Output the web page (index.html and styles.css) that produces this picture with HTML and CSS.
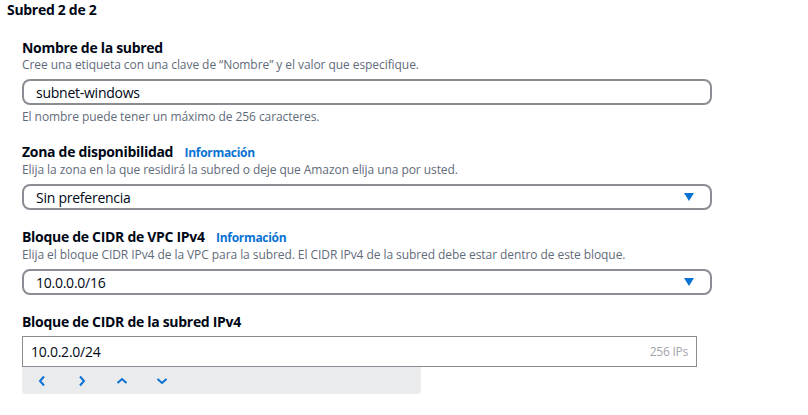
FILE: index.html
```html
<!DOCTYPE html>
<html lang="es">
<head>
<meta charset="utf-8">
<title>Subred 2 de 2</title>
<link rel="stylesheet" href="styles.css">
</head>
<body>
<div class="page">
  <h2 class="title">Subred 2 de 2</h2>
  <div class="form">
    <div class="field">
      <div class="label">Nombre de la subred</div>
      <div class="desc">Cree una etiqueta con una clave de “Nombre” y el valor que especifique.</div>
      <div class="input rounded">subnet-windows</div>
      <div class="constraint">El nombre puede tener un máximo de 256 caracteres.</div>
    </div>
    <div class="field">
      <div class="label">Zona de disponibilidad <span class="info">Información</span></div>
      <div class="desc">Elija la zona en la que residirá la subred o deje que Amazon elija una por usted.</div>
      <div class="input rounded select"><span>Sin preferencia</span><span class="caret"></span></div>
    </div>
    <div class="field">
      <div class="label">Bloque de CIDR de VPC IPv4 <span class="info">Información</span></div>
      <div class="desc">Elija el bloque CIDR IPv4 de la VPC para la subred. El CIDR IPv4 de la subred debe estar dentro de este bloque.</div>
      <div class="input rounded select"><span>10.0.0.0/16</span><span class="caret"></span></div>
    </div>
    <div class="field">
      <div class="label">Bloque de CIDR de la subred IPv4</div>
      <div class="cidr">
        <div class="input square"><span>10.0.2.0/24</span><span class="count">256 IPs</span></div>
        <div class="stepper">
          <span class="step"><svg width="8" height="12" viewBox="0 0 8 12"><path d="M6 1.5 L2 6 L6 10.5" fill="none" stroke="#0972d3" stroke-width="2"/></svg></span>
          <span class="step"><svg width="8" height="12" viewBox="0 0 8 12"><path d="M2 1.5 L6 6 L2 10.5" fill="none" stroke="#0972d3" stroke-width="2"/></svg></span>
          <span class="step"><svg width="12" height="8" viewBox="0 0 12 8"><path d="M1.5 6 L6 2 L10.5 6" fill="none" stroke="#0972d3" stroke-width="2"/></svg></span>
          <span class="step"><svg width="12" height="8" viewBox="0 0 12 8"><path d="M1.5 2 L6 6 L10.5 2" fill="none" stroke="#0972d3" stroke-width="2"/></svg></span>
        </div>
      </div>
    </div>
  </div>
</div>
</body>
</html>
```
FILE: styles.css
```css
html, body {
  margin: 0;
  padding: 0;
  background: #ffffff;
}
body {
  font-family: "Open Sans", "Noto Sans", Arial, sans-serif;
  color: #000716;
}
.page {
  width: 808px;
  height: 415px;
  padding: 1px 0 0 7px;
  box-sizing: border-box;
}
.title {
  margin: 0;
  font-size: 14px;
  line-height: 18px;
  font-weight: 700;
  letter-spacing: -0.3px;
}
.form {
  padding: 20px 96px 0 15px;
  display: flex;
  flex-direction: column;
  gap: 18px;
}
.field {
  display: flex;
  flex-direction: column;
}
.label {
  font-size: 14px;
  line-height: 18px;
  font-weight: 700;
  letter-spacing: -0.3px;
}
.info {
  font-size: 12px;
  font-weight: 700;
  color: #0972d3;
  margin-left: 8px;
  letter-spacing: -0.3px;
}
.desc {
  font-size: 12px;
  line-height: 16px;
  color: #5f6b7a;
  letter-spacing: -0.07px;
}
.input {
  font-size: 14px;
  color: #000716;
  box-sizing: border-box;
  display: flex;
  align-items: center;
  justify-content: space-between;
  letter-spacing: -0.25px;
}
.rounded {
  margin-top: 6px;
  height: 26px;
  border: 2px solid #8c8c94;
  border-radius: 8px;
  padding: 0 12px;
}
.caret {
  width: 0;
  height: 0;
  border-left: 5px solid transparent;
  border-right: 5px solid transparent;
  border-top: 8px solid #0972d3;
  margin-right: 4px;
}
.constraint {
  margin-top: 4px;
  font-size: 12px;
  line-height: 16px;
  color: #5f6b7a;
  letter-spacing: -0.07px;
}
.cidr {
  margin-top: 5px;
  display: flex;
  flex-direction: column;
}
.square {
  width: 675px;
  height: 31px;
  border: 1px solid #8c8c94;
  padding: 0 8px;
}
.count {
  color: #a4a4ad;
  font-size: 12px;
}
.stepper {
  width: 399px;
  height: 27px;
  background: #e9ebed;
  border-radius: 0 0 4px 4px;
  display: flex;
}
.step {
  width: 40px;
  display: flex;
  align-items: center;
  justify-content: center;
}
```
